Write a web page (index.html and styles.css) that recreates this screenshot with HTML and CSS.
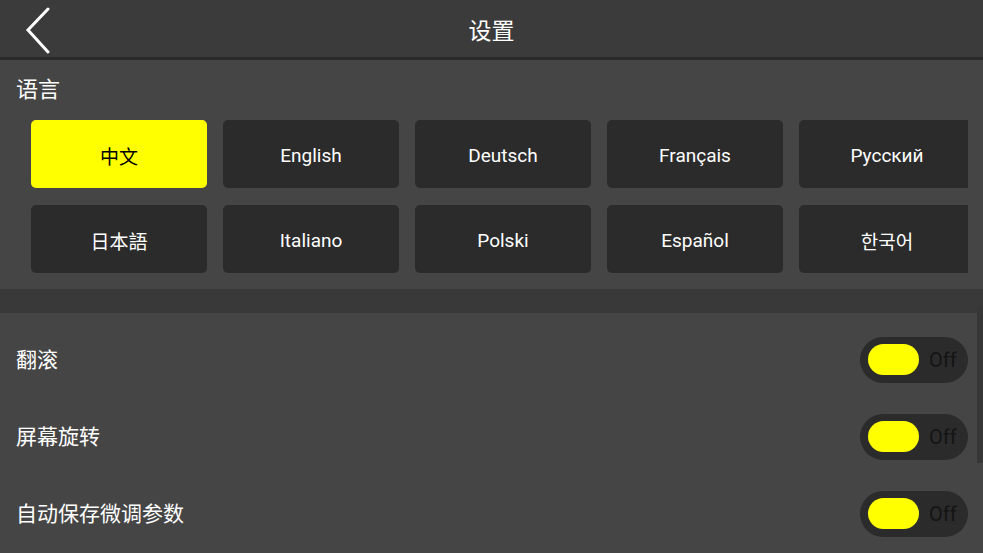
FILE: index.html
```html
<!DOCTYPE html>
<html lang="zh-CN">
<head>
    <meta charset="UTF-8">
    <meta name="viewport" content="width=device-width, initial-scale=1.0">
    <title>设置</title>
    <link rel="stylesheet" href="styles.css">
</head>
<body>
    <header class="topbar">
        <a class="back-btn" href="#">
            <svg width="30" height="48" viewBox="0 0 30 48">
                <path d="M23 2 L3 23 L23 45" fill="none" stroke="#fff" stroke-width="3" stroke-linecap="round" stroke-linejoin="miter"/>
            </svg>
        </a>
        <h1 class="title">设置</h1>
    </header>

    <section class="lang-section">
        <div class="section-label">语言</div>
        <div class="lang-grid">
            <div class="lang-row">
                <button class="lang-btn active">中文</button>
                <button class="lang-btn">English</button>
                <button class="lang-btn">Deutsch</button>
                <button class="lang-btn">Français</button>
                <button class="lang-btn">Русский</button>
            </div>
            <div class="lang-row">
                <button class="lang-btn">日本語</button>
                <button class="lang-btn">Italiano</button>
                <button class="lang-btn">Polski</button>
                <button class="lang-btn">Español</button>
                <button class="lang-btn ko">한국어</button>
            </div>
        </div>
    </section>

    <div class="divider"></div>

    <section class="options">
        <div class="option-row">
            <span class="option-label">翻滚</span>
            <div class="toggle"><span class="knob"></span><span class="toggle-text">Off</span></div>
        </div>
        <div class="option-row">
            <span class="option-label">屏幕旋转</span>
            <div class="toggle"><span class="knob"></span><span class="toggle-text">Off</span></div>
        </div>
        <div class="option-row">
            <span class="option-label">自动保存微调参数</span>
            <div class="toggle"><span class="knob"></span><span class="toggle-text">Off</span></div>
        </div>
        <div class="scrollbar"></div>
    </section>
</body>
</html>
```

FILE: styles.css
```css
html, body {
    margin: 0;
    height: 100%;
    overflow: hidden;
}
body {
    font-family: Roboto, "Noto Sans CJK SC", sans-serif;
    background-color: #454545;
    color: #fff;
}
.topbar {
    height: 57px;
    background-color: #3b3b3b;
    border-bottom: 3px solid #2a2a2a;
    display: flex;
    align-items: center;
    justify-content: center;
    position: relative;
}
.back-btn {
    position: absolute;
    left: 25px;
    top: 7px;
    display: block;
    width: 30px;
    height: 48px;
}
.title {
    margin: 0;
    font-size: 23px;
    font-weight: normal;
    line-height: 30px;
    padding-top: 6px;
}
.lang-section {
    padding: 15px 0 16px 0;
}
.section-label {
    font-size: 22px;
    line-height: 30px;
    padding-left: 16px;
    margin-bottom: 15px;
}
.lang-grid {
    margin: 0 15px 0 31px;
    overflow: hidden;
    display: flex;
    flex-direction: column;
    gap: 17px;
}
.lang-row {
    display: flex;
    gap: 16px;
}
.lang-btn {
    flex: 0 0 176px;
    height: 68px;
    border: none;
    border-radius: 5px;
    background-color: #2b2b2b;
    color: #fff;
    font-family: Roboto, "Noto Sans CJK SC", sans-serif;
    font-size: 19px;
    padding: 3px 0 0 0;
    cursor: pointer;
}
.lang-btn.active {
    background-color: #ffff00;
    color: #000;
}
.lang-btn.ko {
    font-family: Roboto, "Noto Sans CJK KR", sans-serif;
}
.divider {
    height: 24px;
    background-color: #393939;
}
.options {
    position: relative;
    padding-top: 8px;
}
.option-row {
    height: 77px;
    display: flex;
    align-items: center;
    justify-content: space-between;
    padding: 0 15px 0 16px;
}
.option-label {
    font-size: 21px;
    margin-top: -3px;
}
.toggle {
    width: 108px;
    height: 46px;
    border-radius: 23px;
    background-color: #2b2b2b;
    display: flex;
    align-items: center;
    box-sizing: border-box;
    padding-left: 8px;
}
.knob {
    width: 51px;
    height: 31px;
    border-radius: 16px;
    background-color: #ffff00;
}
.toggle-text {
    margin-left: 10px;
    font-size: 20px;
    color: #141414;
}
.scrollbar {
    position: absolute;
    right: 0;
    top: -7px;
    width: 6px;
    height: 157px;
    background-color: #363636;
}
```
